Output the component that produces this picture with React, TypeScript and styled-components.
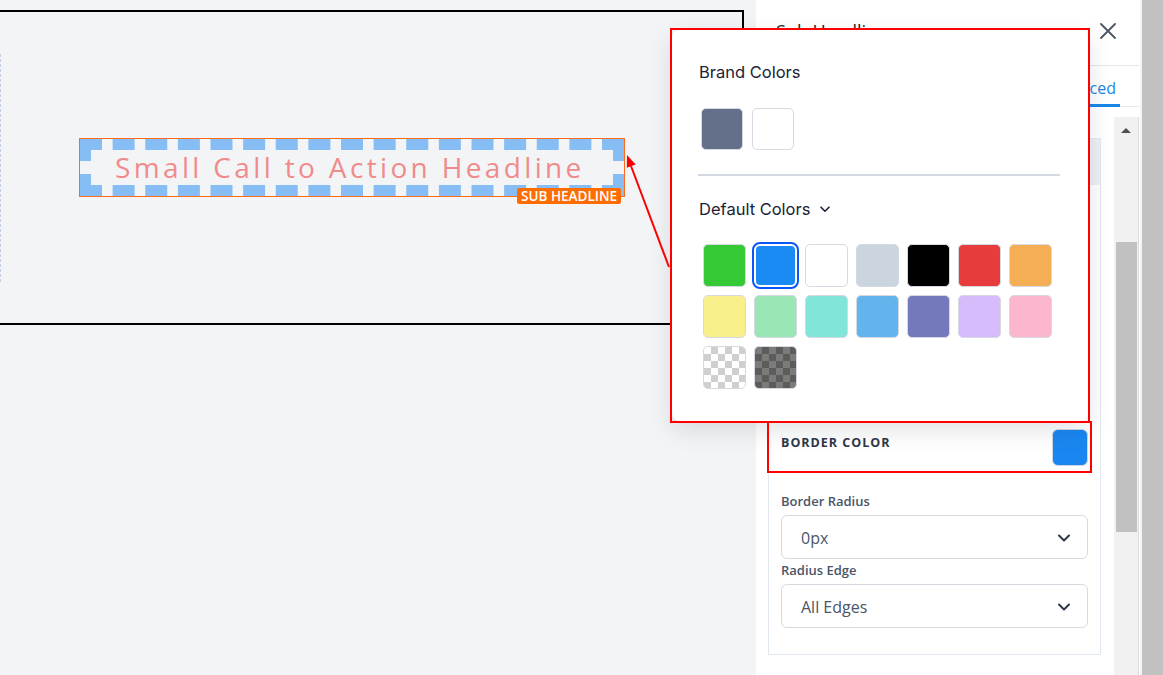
import React from 'react';
import styled, { createGlobalStyle, css } from 'styled-components';

const GlobalStyle = createGlobalStyle`
  html, body { margin: 0; padding: 0; }
  body {
    font-family: "Open Sans", "Liberation Sans", sans-serif;
    background: #f3f4f6;
    overflow: hidden;
  }
  * { box-sizing: border-box; }
`;

const Page = styled.div`
  position: relative;
  width: 1163px;
  height: 675px;
  display: flex;
  overflow: hidden;
  background: #f3f4f6;
`;

/* ---------- canvas ---------- */
const Canvas = styled.main`
  width: 756px;
  flex: none;
  padding-top: 10px;
`;

const Frame = styled.div`
  width: 744px;
  height: 315px;
  border: 2px solid #000;
  border-left: none;
  display: flex;
  align-items: center;
`;

const Section = styled.div`
  height: 228px;
  border-left: 1px dashed #c3cde3;
  display: flex;
  align-items: center;
  padding-left: 78px;
`;

const Headline = styled.div`
  position: relative;
  width: 546px;
  height: 59px;
  border: 1px solid #ff6a1a;
`;

const HeadlineText = styled.h2`
  margin: 0;
  height: 100%;
  border: 11px dashed #86bdf5;
  display: flex;
  align-items: center;
  padding: 0 0 1px 24px;
  font-family: "Open Sans", sans-serif;
  font-weight: 400;
  font-size: 28px;
  letter-spacing: 3.35px;
  color: #f08b8b;
  white-space: nowrap;
`;

const Badge = styled.span`
  position: absolute;
  right: 3px;
  bottom: -8px;
  height: 16px;
  padding: 0 4px;
  background: #ff6d00;
  color: #fff;
  border-radius: 2px;
  font: 600 13.5px/16px "Open Sans", sans-serif;
  white-space: nowrap;
`;

/* ---------- side panel ---------- */
const Panel = styled.aside`
  width: 384px;
  flex: none;
  background: #fff;
  display: flex;
  flex-direction: column;
  padding-right: 1px;
`;

const PanelHeader = styled.header`
  height: 66px;
  flex: none;
  border-bottom: 1px solid #e5e7eb;
  display: flex;
  align-items: center;
  justify-content: space-between;
  padding: 0 23px 4px 20px;
`;

const Title = styled.h1`
  margin: 0;
  font: 400 18px/24px "Open Sans", sans-serif;
  color: #1f2937;
`;

const CloseButton = styled.button`
  border: 0;
  background: none;
  padding: 0;
  width: 16px;
  height: 16px;
  display: flex;
  color: #4b5563;
`;

const Tabs = styled.nav`
  height: 41px;
  flex: none;
  border-bottom: 1px solid #e5e7eb;
  display: flex;
  justify-content: flex-end;
  gap: 34px;
  padding-right: 19px;
`;

const Tab = styled.div<{ $active?: boolean }>`
  display: flex;
  align-items: center;
  padding: 6px 4px 0;
  margin-bottom: -1px;
  font: 400 16px/20px "Open Sans", sans-serif;
  color: ${(p) => (p.$active ? '#1a87e8' : '#4b5563')};
  border-bottom: 3px solid ${(p) => (p.$active ? '#1a87e8' : 'transparent')};
`;

const Body = styled.div`
  flex: 1;
  min-height: 0;
  display: flex;
  padding-top: 10px;
`;

const Content = styled.div`
  flex: 1;
  padding: 21px 13px 0 12px;
  overflow: hidden;
`;

const Track = styled.div`
  width: 25px;
  flex: none;
  background: #f1f1f1;
  border-right: 1px solid #dadada;
  display: flex;
  flex-direction: column;
  align-items: center;
`;

const TrackArrow = styled.div`
  height: 26px;
  display: flex;
  align-items: center;
  &::before {
    content: '';
    border-left: 5.5px solid transparent;
    border-right: 5.5px solid transparent;
    border-bottom: 5px solid #505050;
    margin-top: 1px;
  }
`;

const Thumb = styled.div`
  width: 21px;
  height: 290px;
  margin-top: 99px;
  background: #c1c1c1;
`;

const PageScrollbar = styled.div`
  width: 23px;
  flex: none;
  background: #c1c1c1;
  border-left: 2px solid #f4f4f4;
`;

const Card = styled.section`
  border: 1px solid #e2e8f0;
  background: #fff;
`;

const CardHeader = styled.div`
  height: 46px;
  background: #edf0f4;
`;

const HiddenFields = styled.div`
  height: 238px;
`;

const ColorRow = styled.div`
  height: 50px;
  display: flex;
  align-items: flex-start;
  justify-content: space-between;
  padding: 6px 12px 0;
`;

const RowLabel = styled.span`
  font: 700 12.5px/28px "Open Sans", sans-serif;
  letter-spacing: 1px;
  color: #2d3748;
  text-transform: uppercase;
`;

const ColorChip = styled.div<{ $color: string }>`
  width: 36px;
  height: 37px;
  border-radius: 6px;
  background: ${(p) => p.$color};
  border: 1px solid #cfd6df;
`;

const Fields = styled.div`
  padding: 19px 12px 24px;
  display: flex;
  flex-direction: column;
`;

const FieldLabel = styled.label`
  font: 600 13px/18px "Open Sans", sans-serif;
  color: #4a5568;
  margin-bottom: 5px;
`;

const Select = styled.div`
  height: 44px;
  border: 1px solid #d5d9e0;
  border-radius: 6px;
  display: flex;
  align-items: center;
  justify-content: space-between;
  padding: 1px 17px 0 19px;
  margin-bottom: 2px;
  font: 400 16px/20px "Open Sans", sans-serif;
  color: #4a5568;
`;

/* ---------- popover ---------- */
const Popover = styled.div`
  position: absolute;
  left: 672px;
  top: 30px;
  width: 416px;
  height: 391px;
  background: #fff;
  border-radius: 8px;
  box-shadow: 0 8px 26px rgba(15, 23, 42, 0.13);
  padding: 32px 28px 0 27px;
  display: flex;
  flex-direction: column;
`;

const PopTitle = styled.div`
  font: 400 16.5px/20px Inter, "Open Sans", sans-serif;
  color: #1a2236;
  display: flex;
  align-items: center;
  gap: 10px;
`;

const BrandRow = styled.div`
  display: flex;
  gap: 9px;
  margin: 26px 0 0 2px;
`;

const Divider = styled.hr`
  margin: 24px 0 0 -1px;
  width: 362px;
  height: 2px;
  border: 0;
  background: #d3d8e2;
`;

const DefaultTitle = styled(PopTitle)`
  margin-top: 23px;
`;

const Grid = styled.div`
  margin: 25px 0 0 4px;
  display: grid;
  grid-template-columns: repeat(7, 43px);
  grid-auto-rows: 43px;
  gap: 8px;
`;

const checker = (a: string, b: string) => css`
  background-color: ${b};
  background-image: conic-gradient(${a} 0 25%, ${b} 0 50%, ${a} 0 75%, ${b} 0);
  background-size: 14px 14px;
`;

const Swatch = styled.div<{ $color?: string; $pattern?: 'light' | 'dark'; $selected?: boolean; $size?: number }>`
  width: ${(p) => p.$size ?? 43}px;
  height: ${(p) => p.$size ?? 43}px;
  border-radius: 5px;
  border: 1px solid #d5d9e2;
  ${(p) => p.$color && css`background: ${p.$color};`}
  ${(p) => p.$pattern === 'light' && checker('#cfcfcf', '#ffffff')}
  ${(p) => p.$pattern === 'dark' && checker('#5c5c5c', '#7b7b7b')}
  ${(p) =>
    p.$selected &&
    css`
      border: 2px solid #fff;
      outline: 2px solid #0b57f5;
      outline-offset: 0;
      border-radius: 6px;
    `}
`;

/* ---------- annotations ---------- */
const Annotation = styled.div<{ $x: number; $y: number; $w: number; $h: number }>`
  position: absolute;
  left: ${(p) => p.$x}px;
  top: ${(p) => p.$y}px;
  width: ${(p) => p.$w}px;
  height: ${(p) => p.$h}px;
  border: 2px solid #ff0000;
  pointer-events: none;
`;

const ArrowLayer = styled.svg`
  position: absolute;
  left: 600px;
  top: 140px;
  width: 80px;
  height: 140px;
  pointer-events: none;
`;

const Chevron = () => (
  <svg width="12" height="8" viewBox="0 0 12 8" fill="none">
    <path d="M1 1.5 6 6.5 11 1.5" stroke="#2d3748" strokeWidth="2" strokeLinecap="round" strokeLinejoin="round" />
  </svg>
);

const palette: { color?: string; pattern?: 'light' | 'dark'; selected?: boolean }[] = [
  { color: '#35c936' },
  { color: '#1a8bf2', selected: true },
  { color: '#ffffff' },
  { color: '#cbd5df' },
  { color: '#000000' },
  { color: '#e83c3c' },
  { color: '#f6ae55' },
  { color: '#faf08b' },
  { color: '#9ae6b5' },
  { color: '#81e6d9' },
  { color: '#63b3ed' },
  { color: '#7479bd' },
  { color: '#d6bcfa' },
  { color: '#fbb6ce' },
  { pattern: 'light' },
  { pattern: 'dark' },
];

export default function App() {
  return (
    <>
      <GlobalStyle />
      <Page>
        <Canvas>
          <Frame>
            <Section>
              <Headline>
                <HeadlineText>Small Call to Action Headline</HeadlineText>
                <Badge>SUB HEADLINE</Badge>
              </Headline>
            </Section>
          </Frame>
        </Canvas>

        <Panel>
          <PanelHeader>
            <Title>Sub Headline</Title>
            <CloseButton aria-label="Close">
              <svg width="16" height="16" viewBox="0 0 16 16">
                <path d="M1 1 15 15 M15 1 1 15" stroke="currentColor" strokeWidth="1.8" strokeLinecap="round" />
              </svg>
            </CloseButton>
          </PanelHeader>
          <Tabs>
            <Tab>General</Tab>
            <Tab>Style</Tab>
            <Tab $active>Advanced</Tab>
          </Tabs>
          <Body>
            <Content>
              <Card>
                <CardHeader />
                <HiddenFields />
                <ColorRow>
                  <RowLabel>Border Color</RowLabel>
                  <ColorChip $color="#1a87f0" />
                </ColorRow>
                <Fields>
                  <FieldLabel>Border Radius</FieldLabel>
                  <Select>
                    0px <Chevron />
                  </Select>
                  <FieldLabel>Radius Edge</FieldLabel>
                  <Select>
                    All Edges <Chevron />
                  </Select>
                </Fields>
              </Card>
            </Content>
            <Track>
              <TrackArrow />
              <Thumb />
            </Track>
          </Body>
        </Panel>
        <PageScrollbar />

        <Popover>
          <PopTitle>Brand Colors</PopTitle>
          <BrandRow>
            <Swatch $size={42} $color="#64708a" />
            <Swatch $size={42} $color="#ffffff" />
          </BrandRow>
          <Divider />
          <DefaultTitle>
            Default Colors
            <svg width="10" height="7" viewBox="0 0 10 7" fill="none">
              <path d="M1 1.2 5 5.2 9 1.2" stroke="#1a2236" strokeWidth="1.6" strokeLinecap="round" strokeLinejoin="round" />
            </svg>
          </DefaultTitle>
          <Grid>
            {palette.map((s, i) => (
              <Swatch key={i} $color={s.color} $pattern={s.pattern} $selected={s.selected} />
            ))}
          </Grid>
        </Popover>

        <Annotation $x={670} $y={28} $w={420} $h={395} />
        <Annotation $x={767} $y={421} $w={325} $h={52} />
        <ArrowLayer viewBox="600 140 80 140">
          <line x1="669" y1="267" x2="631" y2="166" stroke="#ff0000" strokeWidth="2" />
          <polygon points="627,155 635.6,164.4 626.8,167.8" fill="#ff0000" />
        </ArrowLayer>
      </Page>
    </>
  );
}
